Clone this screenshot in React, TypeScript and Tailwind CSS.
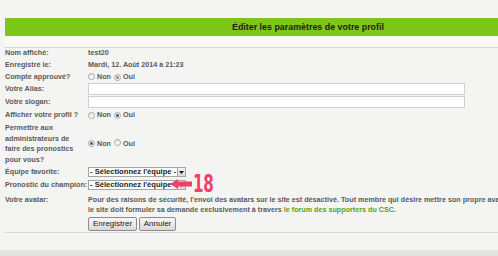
import React from "react";

function Radio({ checked, disabled }: { checked?: boolean; disabled?: boolean }) {
  return (
    <span className="inline-flex items-center justify-center w-[7px] h-[7px] rounded-full border border-[#a8a8a8] bg-gradient-to-b from-[#e4e4e4] to-white shrink-0">
      {checked ? (
        <span className={"block w-[3px] h-[3px] rounded-full " + (disabled ? "bg-[#8a8a8a]" : "bg-[#1f5fa8]")} />
      ) : null}
    </span>
  );
}

function RadioPair({ value, disabled }: { value: "non" | "oui"; disabled?: boolean }) {
  return (
    <div className="flex items-center">
      <Radio checked={value === "non"} disabled={disabled} />
      <span className="ml-[2px]">Non</span>
      <span className="ml-[3px]"><Radio checked={value === "oui"} disabled={disabled} /></span>
      <span className="ml-[2px]">Oui</span>
    </div>
  );
}

function Row({ label, h, children }: { label: React.ReactNode; h: string; children?: React.ReactNode }) {
  return (
    <div className={"flex items-center " + h}>
      <div className="w-[88px] shrink-0 pl-[5px] whitespace-nowrap">{label}</div>
      <div className="flex-1 flex items-center">{children}</div>
    </div>
  );
}

function FakeSelect({ text }: { text: string }) {
  return (
    <div className="relative flex items-center w-[98px] h-[10px] bg-white border border-[#a5a5a5]">
      <span className="pl-[1px] text-[7.6px] leading-[8px] text-[#222] whitespace-nowrap">{text}</span>
      <span className="absolute right-0 top-0 bottom-0 w-[8px] border-l border-[#a5a5a5] bg-gradient-to-b from-[#f4f4f4] to-[#d8d8d8] flex items-center justify-center">
        <svg width="5" height="3" viewBox="0 0 5 3"><path d="M0 0 L5 0 L2.5 3 Z" fill="#111" /></svg>
      </span>
    </div>
  );
}

export default function App() {
  return (
    <div className="relative w-[498px] h-[256px] overflow-hidden bg-[#f4f5f2] text-[7.2px] font-bold text-[#5a5a5a] font-['Liberation_Sans',Arial,sans-serif] leading-[10px]">
      <div className="h-[18px]" />
      <div className="ml-[5px] w-[600px] h-[17.5px] bg-[#7cc71a] flex items-center pl-[227px] text-[8.9px] text-[#1c2410] whitespace-nowrap">
        Éditer les paramètres de votre profil
      </div>
      <div className="w-[600px] ml-[5px] h-[12px] bg-[#f8f8f6] border-b border-[#d6d6d6]" />

      <div className="w-[600px]">
        <Row label="Nom affiché:" h="h-[11px]">test20</Row>
        <Row label="Enregistré le:" h="h-[12px]">Mardi, 12. Août 2014 à 21:23</Row>
        <Row label="Compte approuvé?" h="h-[12px]">
          <RadioPair value="oui" disabled />
        </Row>
        <Row label="Votre Alias:" h="h-[13px]">
          <div className="w-[377px] h-[12px] bg-white border border-[#cfcfcf]" />
        </Row>
        <Row label="Votre slogan:" h="h-[13px]">
          <div className="w-[377px] h-[12px] bg-white border border-[#cfcfcf]" />
        </Row>
        <Row label="Afficher votre profil ?" h="h-[13px]">
          <RadioPair value="oui" />
        </Row>
        <div className="flex items-center h-[44px]">
          <div className="w-[88px] shrink-0 pl-[5px] pt-[1px] leading-[10.5px] whitespace-nowrap">
            Permettre aux<br />administrateurs de<br />faire des pronostics<br />pour vous?
          </div>
          <div className="flex-1 flex items-center">
            <RadioPair value="non" />
          </div>
        </div>
        <Row label="Équipe favorite:" h="h-[13px]">
          <FakeSelect text="- Sélectionnez l'équipe -" />
        </Row>
        <Row label="Pronostic du champion:" h="h-[13px]">
          <div className="relative">
            <FakeSelect text="- Sélectionnez l'équipe -" />
            <div className="absolute left-[82px] top-[-6px] flex items-center">
              <svg width="22" height="12" viewBox="0 0 22 12">
                <path d="M0 6 L8 1 L8 3.6 L22 3.4 L22 8.6 L8 8.4 L8 11 Z" fill="#f0406b" />
              </svg>
              <span className="ml-[1px] inline-block text-[#f0406b] text-[24px] leading-[20px] font-bold font-['DejaVu_Sans_Condensed','DejaVu_Sans',sans-serif] scale-x-[0.7] origin-left tracking-[-0.5px]">
                18
              </span>
            </div>
          </div>
        </Row>
        <div className="flex pt-[3px]">
          <div className="w-[88px] shrink-0 pl-[5px] leading-[10.7px] whitespace-nowrap">Votre avatar:</div>
          <div className="flex-1 leading-[10.7px] whitespace-nowrap">
            Pour des raisons de sécurité, l'envoi des avatars sur le site est désactivé. Tout membre qui désire mettre son propre avatar sur
            <br />
            le site doit formuler sa demande exclusivement à travers{" "}
            <span className="text-[#5e9f12]">le forum des supporters du CSC</span>.
          </div>
        </div>
        <div className="ml-[5px] border-b border-[#d6d6d6] pt-[1.5px] pb-[1px] pl-[83px] flex gap-[2px]">
          <button className="w-[49px] h-[14px] rounded-[2px] border border-[#8c8c8c] bg-gradient-to-b from-[#f8f8f8] to-[#d9d9d9] text-[8px] font-normal text-[#1a1a1a] leading-[12px]">
            Enregistrer
          </button>
          <button className="w-[37px] h-[14px] rounded-[2px] border border-[#8c8c8c] bg-gradient-to-b from-[#f8f8f8] to-[#d9d9d9] text-[8px] font-normal text-[#1a1a1a] leading-[12px]">
            Annuler
          </button>
        </div>
      </div>

      <div className="absolute left-0 right-0 bottom-0 h-[6px] bg-[#e2e4e1]" />
    </div>
  );
}
